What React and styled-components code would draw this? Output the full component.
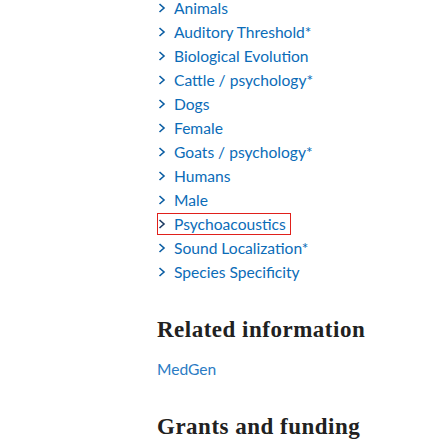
import React from "react";
import styled, { createGlobalStyle } from "styled-components";

const Global = createGlobalStyle`
  html, body { margin: 0; padding: 0; background: #fff; }
  body { width: 448px; height: 448px; overflow: hidden; }
`;

const Page = styled.div`
  padding-left: 157px;
  margin-top: -4px;
  font-family: Lato, "Noto Sans", sans-serif;
`;

const List = styled.ul`
  list-style: none;
  margin: 0;
  padding: 0;
`;

const Item = styled.li`
  height: 24px;
  display: flex;
  align-items: center;
`;

const Term = styled.a`
  display: inline-flex;
  align-items: center;
  height: 22px;
  padding-right: 4px;
  box-sizing: border-box;
  border: 1px solid ${(p) => (p.$focused ? "#e0201b" : "transparent")};
  color: #0b6cb8;
  font-size: 15.6px;
  text-decoration: none;
  white-space: nowrap;
`;

const Chevron = styled.svg`
  width: 8px;
  height: 10px;
  margin-right: 8px;
  flex: none;
`;

const Heading = styled.h2`
  margin: 0;
  font-family: "Liberation Serif", "DejaVu Serif", serif;
  font-weight: bold;
  font-size: 23px;
  line-height: 28px;
  color: #212121;
  letter-spacing: 0.5px;
`;

const Section = styled.section`
  margin-top: ${(p) => p.$top}px;
`;

const Link = styled.a`
  display: block;
  margin-top: 15px;
  color: #2b7bc4;
  font-size: 15.6px;
  line-height: 20px;
  text-decoration: none;
`;

const terms = [
  "Animals",
  "Auditory Threshold*",
  "Biological Evolution",
  "Cattle / psychology*",
  "Dogs",
  "Female",
  "Goats / psychology*",
  "Humans",
  "Male",
  "Psychoacoustics",
  "Sound Localization*",
  "Species Specificity",
];

export default function App() {
  return (
    <>
      <Global />
      <Page>
        <List>
          {terms.map((t) => {
            const focused = t === "Psychoacoustics";
            return (
              <Item key={t}>
                <Term href="#" $focused={focused}>
                  <Chevron viewBox="0 0 8 10">
                    <path
                      d="M1.5 1 L6 5 L1.5 9"
                      fill="none"
                      stroke={focused ? "#1d3c63" : "#0b5da3"}
                      strokeWidth="1.6"
                    />
                  </Chevron>
                  {t}
                </Term>
              </Item>
            );
          })}
        </List>
        <Section $top={32}>
          <Heading>Related information</Heading>
          <Link href="#">MedGen</Link>
        </Section>
        <Section $top={34}>
          <Heading>Grants and funding</Heading>
        </Section>
      </Page>
    </>
  );
}
